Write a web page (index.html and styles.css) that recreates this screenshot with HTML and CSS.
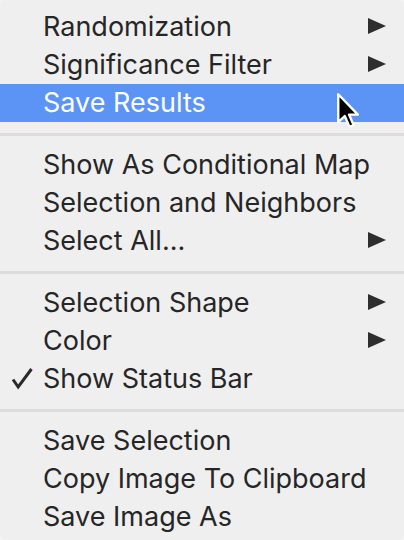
FILE: index.html
```html
<!DOCTYPE html>
<html>
<head>
<meta charset="utf-8">
<link rel="stylesheet" href="styles.css">
</head>
<body>
<div class="menu">
  <div class="group">
    <div class="item"><span class="check"></span><span class="label">Randomization</span><span class="arrow"></span></div>
    <div class="item"><span class="check"></span><span class="label">Significance Filter</span><span class="arrow"></span></div>
    <div class="item active"><span class="check"></span><span class="label">Save Results</span>
      <svg class="cursor" width="26" height="38" viewBox="0 0 14 20.5"><path d="M1.2 1.2 L1.2 16.2 L4.7 13 L7.2 18.8 L9.5 17.8 L7 12.2 L11.8 12.2 Z" fill="#000" stroke="#fff" stroke-width="1.3" stroke-linejoin="round"/></svg>
    </div>
  </div>
  <div class="sep"></div>
  <div class="group">
    <div class="item"><span class="check"></span><span class="label">Show As Conditional Map</span></div>
    <div class="item"><span class="check"></span><span class="label">Selection and Neighbors</span></div>
    <div class="item"><span class="check"></span><span class="label">Select All...</span><span class="arrow"></span></div>
  </div>
  <div class="sep"></div>
  <div class="group">
    <div class="item"><span class="check"></span><span class="label">Selection Shape</span><span class="arrow"></span></div>
    <div class="item"><span class="check"></span><span class="label">Color</span><span class="arrow"></span></div>
    <div class="item"><span class="check"><svg width="24" height="24" viewBox="0 0 24 24"><path d="M3 13.5 L8.2 21 L21.5 3" fill="none" stroke="#2b2b2b" stroke-width="3"/></svg></span><span class="label">Show Status Bar</span></div>
  </div>
  <div class="sep"></div>
  <div class="group">
    <div class="item"><span class="check"></span><span class="label">Save Selection</span></div>
    <div class="item"><span class="check"></span><span class="label">Copy Image To Clipboard</span></div>
    <div class="item"><span class="check"></span><span class="label">Save Image As</span></div>
  </div>
</div>
</body>
</html>
```
FILE: styles.css
```css
html, body {
  margin: 0;
  padding: 0;
  background: #f4f4f4;
}
.menu {
  width: 404px;
  height: 540px;
  box-sizing: border-box;
  padding-top: 8px;
  background: #efefef;
  border-radius: 6px;
  font-family: Inter, "Noto Sans", sans-serif;
  font-size: 27px;
  color: #262626;
  overflow: hidden;
}
.item {
  position: relative;
  height: 38px;
  box-sizing: border-box;
  padding-bottom: 2px;
  display: flex;
  align-items: center;
  padding-right: 18px;
}
.check {
  width: 43px;
  flex: none;
  display: flex;
  justify-content: flex-end;
  padding-right: 9px;
  box-sizing: border-box;
}
.check svg {
  display: block;
}
.label {
  flex: 1;
  white-space: nowrap;
}
.arrow {
  flex: none;
  width: 0;
  height: 0;
  border-left: 18px solid #2e2e2e;
  border-top: 8.5px solid transparent;
  border-bottom: 8.5px solid transparent;
}
.active {
  background: #5b94f4;
  color: #ffffff;
}
.cursor {
  position: absolute;
  left: 336px;
  top: 8px;
}
.sep {
  height: 24px;
  display: flex;
  align-items: center;
}
.sep::before {
  content: "";
  display: block;
  width: 100%;
  height: 3px;
  background: #dcdcdc;
}
```
